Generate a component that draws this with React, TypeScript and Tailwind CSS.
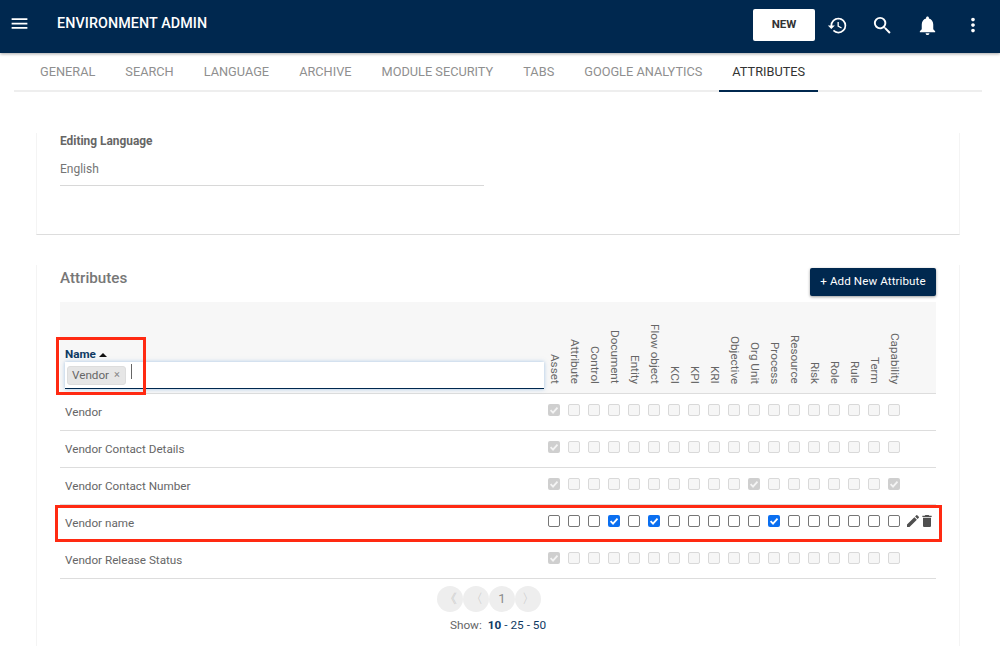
import { MdDelete, MdEdit, MdHistory, MdMenu, MdMoreVert, MdNotifications, MdSearch } from "react-icons/md";

const tabs = ["GENERAL", "SEARCH", "LANGUAGE", "ARCHIVE", "MODULE SECURITY", "TABS", "GOOGLE ANALYTICS", "ATTRIBUTES"];

const columns = ["Asset", "Attribute", "Control", "Document", "Entity", "Flow object", "KCI", "KPI", "KRI", "Objective", "Org Unit", "Process", "Resource", "Risk", "Role", "Rule", "Term", "Capability"];

const rows: Array<{ name: string; checked: number[]; editable?: boolean }> = [
  { name: "Vendor", checked: [0] },
  { name: "Vendor Contact Details", checked: [0] },
  { name: "Vendor Contact Number", checked: [0, 10, 17] },
  { name: "Vendor name", checked: [3, 5, 11], editable: true },
  { name: "Vendor Release Status", checked: [0] },
];

function Tick({ color }: { color: string }) {
  return (
    <svg viewBox="0 0 12 12" className="w-[12px] h-[12px]">
      <path d="M2.6 6.2 5 8.6 9.5 3.6" fill="none" stroke={color} strokeWidth="1.8" />
    </svg>
  );
}

function Box({ checked, editable }: { checked: boolean; editable?: boolean }) {
  if (editable) {
    return checked ? (
      <div className="w-[12px] h-[12px] rounded-[2px] bg-[#0b6ff0] flex items-center justify-center">
        <Tick color="#ffffff" />
      </div>
    ) : (
      <div className="w-[12px] h-[12px] rounded-[2px] border border-[#767676] bg-white" />
    );
  }
  return checked ? (
    <div className="w-[12px] h-[12px] rounded-[2px] bg-[#cfcfcf] flex items-center justify-center">
      <Tick color="#f4f4f4" />
    </div>
  ) : (
    <div className="w-[12px] h-[12px] rounded-[2px] border border-[#d9d9d9] bg-[#f6f6f6]" />
  );
}

function PageButton({ label, dim }: { label: string; dim?: boolean }) {
  return (
    <div className={"w-[26px] h-[26px] rounded-full bg-[#eeeeee] flex items-center justify-center text-[13px] " + (dim ? "text-[#c4c4c4]" : "text-[#8a8a8a]")}>
      {label}
    </div>
  );
}

export default function App() {
  return (
    <div className="relative w-[1000px] h-[646px] overflow-hidden bg-white font-['Roboto',sans-serif]">
      <header className="h-[53px] bg-[#00284f] flex items-center shadow-[0_1px_3px_rgba(0,0,0,0.35)] relative z-10">
        <MdMenu className="text-white ml-[9px] w-[21px] h-[21px] -mt-[6px]" />
        <h1 className="ml-[27px] -mt-[5px] text-white text-[14.3px] font-medium tracking-[0.1px] whitespace-nowrap">ENVIRONMENT ADMIN</h1>
        <div className="ml-auto flex items-center -mt-[3px]">
          <button className="w-[62px] h-[32px] bg-white rounded-[2px] text-[#333333] text-[11.5px] font-bold">NEW</button>
          <MdHistory className="text-white w-[21px] h-[21px] ml-[12px]" />
          <MdSearch className="text-white w-[23px] h-[23px] ml-[23px]" />
          <MdNotifications className="text-white w-[23px] h-[23px] ml-[22px]" />
          <MdMoreVert className="text-white w-[22px] h-[22px] ml-[23px] mr-[16px]" />
        </div>
      </header>

      <nav className="mx-[14px] w-[968px] h-[39px] border-b-2 border-[#eeeeee] flex pl-[11px]">
        {tabs.map((tab) => {
          const active = tab === "ATTRIBUTES";
          return (
            <div
              key={tab}
              className={
                "h-[39px] mx-[2px] px-[13px] pt-[1px] flex items-center text-[12.75px] whitespace-nowrap border-b-2 " +
                (active ? "text-[#333333] border-[#00284f]" : "text-[#8f8f8f] border-transparent")
              }
            >
              {tab}
            </div>
          );
        })}
      </nav>

      <section className="ml-[36px] w-[924px] mt-[41px] h-[102px] border-x border-[#f4f4f4] border-b border-b-[#dddddd] pl-[23px]">
        <div className="pt-[1px] text-[11.9px] font-bold text-[#666666] leading-[14px]">Editing Language</div>
        <div className="mt-[14px] w-[424px] h-[24px] border-b border-[#d8d8d8] text-[12px] text-[#757575] leading-[14px]">English</div>
      </section>

      <section className="ml-[36px] w-[924px] mt-[30px] h-[381px] border-x border-[#f4f4f4] px-[23px]">
        <div className="flex justify-between items-start pt-[3px] h-[37px]">
          <h2 className="mt-[1px] text-[15.2px] font-medium text-[#777777] leading-[18px]">Attributes</h2>
          <button className="w-[126px] h-[28px] bg-[#00284f] rounded-[2px] text-white text-[11.6px] tracking-[0.1px] shadow-[0_1px_3px_rgba(0,0,0,0.4)]">+ Add New Attribute</button>
        </div>

        <div className="h-[92px] bg-[#f7f7f7] border-b border-[#dddddd] flex items-end pl-[5px]">
          <div className="w-[479px] mb-[4px]">
            <div className="flex items-center text-[11.7px] font-bold text-[#0f3a63] leading-[14px] mb-[1px]">
              Name
              <span className="ml-[3px] mt-[2px] w-0 h-0 border-x-[4px] border-x-transparent border-b-[4px] border-b-[#111111]" />
            </div>
            <div className="h-[27px] bg-white border-b border-[#00284f] shadow-[0_0_4px_rgba(90,150,210,0.55)] flex items-start pl-[2px] pt-[4px]">
              <div className="h-[19px] w-[59px] rounded-[3px] bg-[#e6e6e6] border border-[#dddddd] flex items-center pl-[4px] text-[11.7px] text-[#666666]">
                Vendor
                <span className="ml-[5px] text-[11px] text-[#888888]">×</span>
              </div>
              <div className="ml-[5px] -mt-[2px] w-px h-[15px] bg-[#666666]" />
            </div>
          </div>
          <div className="flex items-end mb-[9px] ml-[1px]">
            {columns.map((col) => (
              <div key={col} className="w-[20px] flex justify-center items-end">
                <span className="[writing-mode:vertical-rl] text-[11.7px] leading-[14px] text-[#666666] whitespace-nowrap">{col}</span>
              </div>
            ))}
          </div>
        </div>

        {rows.map((row) => (
          <div key={row.name} className="h-[37px] border-b border-[#dddddd] flex items-center pl-[5px]">
            <div className="w-[479px] pt-[2px] text-[11.7px] text-[#666666]">{row.name}</div>
            <div className="flex -mt-[4px]">
              {columns.map((col, i) => (
                <div key={col} className="w-[20px] flex justify-center">
                  <Box checked={row.checked.includes(i)} editable={row.editable} />
                </div>
              ))}
            </div>
            {row.editable && (
              <div className="flex items-center -mt-[4px] ml-[1px] text-[#4f4f4f]">
                <MdEdit className="w-[16px] h-[16px]" />
                <MdDelete className="w-[16px] h-[16px] ml-[-2px]" />
              </div>
            )}
          </div>
        ))}

        <div className="flex flex-col items-center mt-[7px] pl-[2px]">
          <div className="flex mr-[20px]">
            <PageButton label="《" dim />
            <PageButton label="〈" dim />
            <PageButton label="1" />
            <PageButton label="〉" dim />
          </div>
          <div className="mt-[5px] mr-[2px] text-[11.8px] text-[#666666]">
            Show:<span className="ml-[6px] font-bold text-[#0f3a63]">10</span>
            <span className="text-[#0f3a63]"> - 25 - 50</span>
          </div>
        </div>
      </section>

      <div className="absolute left-[56px] top-[337px] w-[90px] h-[58px] border-[3px] border-[#ff2a12] pointer-events-none" />
      <div className="absolute left-[55px] top-[505px] w-[887px] h-[37px] border-[3px] border-[#ff2a12] pointer-events-none" />
    </div>
  );
}
